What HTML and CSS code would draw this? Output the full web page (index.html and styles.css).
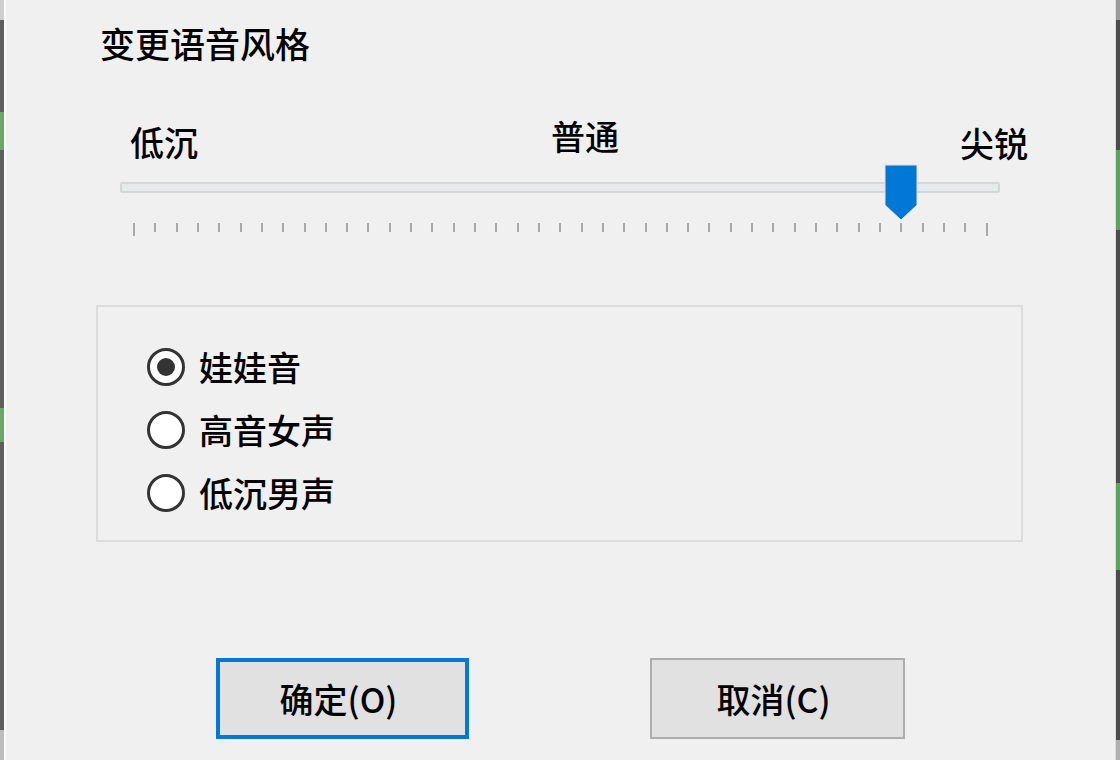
FILE: index.html
```html
<!DOCTYPE html>
<html lang="zh-CN">
<head>
<meta charset="utf-8">
<title>变更语音风格</title>
<link rel="stylesheet" href="styles.css">
</head>
<body>
<div class="frame">
  <div class="edge edge-left"></div>
  <div class="content">
    <div class="title">变更语音风格</div>
    <div class="slider">
      <div class="labels">
        <span class="lab lab-low">低沉</span>
        <span class="lab lab-mid">普通</span>
        <span class="lab lab-high">尖锐</span>
      </div>
      <div class="track-wrap">
        <div class="track"></div>
        <div class="thumb">
          <svg width="34" height="57" viewBox="0 0 34 57"><path d="M1 1 H33 V41 L17 56 L1 41 Z" fill="#0078d7" stroke="#f4dcc4" stroke-width="1"/></svg>
        </div>
      </div>
      <div class="ticks">
        <i class="long"></i><i></i><i></i><i></i><i></i><i></i><i></i><i></i><i></i><i></i>
        <i></i><i></i><i></i><i></i><i></i><i></i><i></i><i></i><i></i><i></i>
        <i></i><i></i><i></i><i></i><i></i><i></i><i></i><i></i><i></i><i></i>
        <i></i><i></i><i></i><i></i><i></i><i></i><i></i><i></i><i></i><i></i>
        <i class="long"></i>
      </div>
    </div>
    <div class="group">
      <label class="radio"><span class="dot checked"></span><span>娃娃音</span></label>
      <label class="radio"><span class="dot"></span><span>高音女声</span></label>
      <label class="radio"><span class="dot"></span><span>低沉男声</span></label>
    </div>
    <div class="buttons">
      <div class="btn btn-default">确定(O)</div>
      <div class="btn">取消(C)</div>
    </div>
  </div>
  <div class="edge edge-right"></div>
</div>
</body>
</html>
```
FILE: styles.css
```css
* { box-sizing: border-box; }
html, body {
  margin: 0;
  padding: 0;
  width: 1120px;
  height: 760px;
  overflow: hidden;
  background: #f0f0f0;
  font-family: "Noto Sans CJK SC", "Noto Sans", sans-serif;
  color: #000;
}
.frame {
  display: flex;
  width: 1120px;
  height: 760px;
}
.edge {
  width: 4px;
  flex: none;
  background: linear-gradient(to bottom,
    #cfcfcf 0, #cfcfcf 20px,
    #5e5e5e 20px, #5e5e5e 112px,
    #6aa86a 112px, #6aa86a 150px,
    #5e5e5e 150px, #5e5e5e 408px,
    #6aa86a 408px, #6aa86a 442px,
    #5e5e5e 442px, #5e5e5e 730px,
    #bdbdbd 730px);
}
.edge-left {
  border-right: 2px solid #fbfbfb;
  width: 6px;
}
.edge-right {
  background: linear-gradient(to bottom,
    #9a9a9a 0, #9a9a9a 20px,
    #4c4c4c 20px, #4c4c4c 150px,
    #5fa25f 150px, #5fa25f 230px,
    #4c4c4c 230px, #4c4c4c 483px,
    #5fa25f 483px, #5fa25f 570px,
    #4c4c4c 570px, #4c4c4c 740px,
    #b0b0b0 740px);
  border-left: 1px solid #dcdcdc;
  width: 5px;
}
.content {
  flex: 1;
  display: flex;
  flex-direction: column;
}
.title {
  font-size: 35px;
  line-height: 40px;
  margin: 23px 0 0 94px;
  font-weight: 500;
}
.slider {
  margin: 53px 0 0 114px;
  width: 910px;
  display: flex;
  flex-direction: column;
}
.labels {
  display: flex;
  justify-content: space-between;
  align-items: flex-start;
  margin-left: 10px;
  width: 898px;
  height: 52px;
}
.lab {
  font-size: 34px;
  line-height: 40px;
  font-weight: 500;
}
.lab-low { margin-top: 6px; }
.lab-mid { margin-top: 0; margin-left: 12px; }
.lab-high { margin-top: 7px; }
.track-wrap {
  position: relative;
  width: 880px;
  height: 11px;
  margin-top: 14px;
}
.track {
  width: 880px;
  height: 11px;
  background: #e7eaea;
  border: 2px solid #d6d6d6;
  border-radius: 2px;
}
.thumb {
  position: absolute;
  left: 764px;
  top: -18px;
  width: 34px;
  height: 57px;
}
.thumb svg { display: block; }
.ticks {
  display: flex;
  justify-content: space-between;
  align-items: flex-start;
  width: 855px;
  margin: 28px 0 0 13px;
}
.ticks i {
  display: block;
  width: 2px;
  height: 9px;
  margin-top: 2px;
  background: #a9a9a9;
}
.ticks i.long {
  height: 13px;
  margin-top: 2px;
}
.group {
  margin: 69px 0 0 90px;
  width: 927px;
  height: 237px;
  border: 2px solid #dcdcdc;
  display: flex;
  flex-direction: column;
  padding: 39px 0 0 49px;
  gap: 21px;
}
.radio {
  display: flex;
  align-items: center;
  gap: 14px;
  font-size: 34px;
  line-height: 42px;
  height: 42px;
  font-weight: 500;
}
.dot {
  width: 38px;
  height: 38px;
  border-radius: 50%;
  border: 3px solid #333;
  background: #fff;
  display: flex;
  align-items: center;
  justify-content: center;
  flex: none;
}
.dot.checked::after {
  content: "";
  width: 18px;
  height: 18px;
  border-radius: 50%;
  background: #333;
}
.buttons {
  display: flex;
  margin: 116px 0 0 210px;
  gap: 181px;
}
.btn {
  width: 255px;
  height: 81px;
  background: #e1e1e1;
  border: 2px solid #adadad;
  display: flex;
  align-items: center;
  justify-content: center;
  font-size: 34px;
  padding-right: 8px;
  font-weight: 500;
}
.btn-default {
  width: 253px;
  border: 4px solid #0078d7;
}
```
